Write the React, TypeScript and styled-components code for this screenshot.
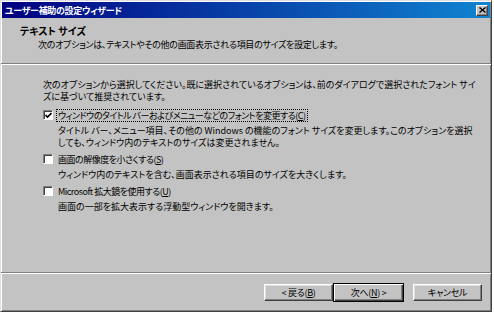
import React, { FC, ReactNode } from "react";
import styled, { createGlobalStyle } from "styled-components";

const GlobalStyle = createGlobalStyle`
  html, body {
    margin: 0;
    padding: 0;
    background: #ffffff;
  }
  body {
    font-family: "Noto Sans CJK JP", "Noto Sans", sans-serif;
    font-size: 9px;
    color: #000;
    font-feature-settings: "palt";
  }
`;

const Window = styled.div`
  width: 492px;
  height: 312px;
  box-sizing: border-box;
  display: flex;
  flex-direction: column;
  background: #c3c3c3;
  border: 1px solid;
  border-color: #dfdfdf #404040 #404040 #dfdfdf;
  box-shadow: inset 1px 1px #ffffff, inset -1px -1px #808080;
  padding: 1px;
`;

const TitleBar = styled.div`
  height: 16px;
  display: flex;
  align-items: center;
  justify-content: space-between;
  padding: 0 2px 0 3px;
  background: linear-gradient(to right, #000080, #1084d0);
  color: #ffffff;
  font-weight: bold;
  letter-spacing: -0.3px;
`;

const CloseButton = styled.div`
  width: 12px;
  height: 11px;
  box-sizing: border-box;
  display: flex;
  align-items: center;
  justify-content: center;
  background: #c3c3c3;
  border: 1px solid;
  border-color: #ffffff #404040 #404040 #ffffff;
  box-shadow: inset -1px -1px #808080;
`;

const Header = styled.div`
  height: 45px;
  box-sizing: border-box;
  padding: 6px 0 0 18px;
  line-height: 14px;
`;

const HeaderTitle = styled.div`
  font-weight: bold;
  font-size: 10px;
`;

const HeaderText = styled.div`
  padding-left: 18px;
  letter-spacing: -0.3px;
`;

const Separator = styled.div`
  height: 1px;
  background: #808080;
  border-bottom: 1px solid #ffffff;
  margin: 0 -1px;
`;

const Body = styled.div`
  flex: 1;
  padding: 14px 0 0 41px;
  line-height: 12px;
`;

const Paragraph = styled.p`
  margin: 0 0 5px;
  white-space: nowrap;
`;

const Option = styled.div`
  margin-bottom: 3px;
`;

const OptionRow = styled.label`
  display: flex;
  align-items: center;
  gap: 4px;
  height: 14px;
  white-space: nowrap;
`;

const Box = styled.span`
  width: 10px;
  height: 10px;
  box-sizing: border-box;
  display: flex;
  align-items: center;
  justify-content: center;
  background: #ffffff;
  border: 1px solid;
  border-color: #808080 #ffffff #ffffff #808080;
  box-shadow: inset 1px 1px #404040;
`;

const OptionLabel = styled.span<{ $focused?: boolean }>`
  padding: 0 1px;
  line-height: 11px;
  letter-spacing: -0.5px;
  outline: ${(p) => (p.$focused ? "1px dotted #000" : "none")};
`;

const OptionText = styled.div`
  padding: 3px 0 0 15px;
  white-space: nowrap;
`;

const Key = styled.span`
  text-decoration: underline;
`;

const ButtonRow = styled.div`
  height: 36px;
  display: flex;
  align-items: center;
  justify-content: flex-end;
  padding: 0 8px 0 0;
`;

const Button = styled.div<{ $default?: boolean; $gap?: number }>`
  width: ${(p) => (p.$default ? 71 : 69)}px;
  height: ${(p) => (p.$default ? 19 : 17)}px;
  box-sizing: border-box;
  display: flex;
  align-items: center;
  justify-content: center;
  margin-left: ${(p) => p.$gap ?? 0}px;
  background: #c3c3c3;
  border: 1px solid;
  border-color: ${(p) =>
    p.$default ? "#000000" : "#ffffff #404040 #404040 #ffffff"};
  box-shadow: ${(p) =>
    p.$default
      ? "inset 1px 1px #ffffff, inset -1px -1px #404040, inset -2px -2px #808080"
      : "inset -1px -1px #808080, inset 1px 1px #dfdfdf"};
  white-space: nowrap;
  letter-spacing: -0.3px;
`;

const Check = () => (
  <svg width="7" height="7" viewBox="0 0 7 7">
    <path d="M0.5 3 L2.5 5 L6.5 1" stroke="#000" strokeWidth="1.6" fill="none" />
  </svg>
);

const CloseIcon = () => (
  <svg width="7" height="6" viewBox="0 0 7 6">
    <path d="M0.5 0.5 L6.5 5.5 M6.5 0.5 L0.5 5.5" stroke="#000" strokeWidth="1.4" />
  </svg>
);

interface OptionProps {
  checked?: boolean;
  focused?: boolean;
  label: ReactNode;
  children: ReactNode;
}

const CheckOption: FC<OptionProps> = ({ checked, focused, label, children }) => (
  <Option>
    <OptionRow>
      <Box>{checked && <Check />}</Box>
      <OptionLabel $focused={focused}>{label}</OptionLabel>
    </OptionRow>
    <OptionText>{children}</OptionText>
  </Option>
);

export default function App() {
  return (
    <>
      <GlobalStyle />
      <Window>
        <TitleBar>
          <span>ユーザー補助の設定ウィザード</span>
          <CloseButton>
            <CloseIcon />
          </CloseButton>
        </TitleBar>
        <Header>
          <HeaderTitle>テキスト サイズ</HeaderTitle>
          <HeaderText>
            次のオプションは、テキストやその他の画面表示される項目のサイズを設定します。
          </HeaderText>
        </Header>
        <Separator />
        <Body>
          <Paragraph>
            次のオプションから選択してください。既に選択されているオプションは、前のダイアログで選択されたフォント サイ
            <br />
            ズに基づいて推奨されています。
          </Paragraph>
          <CheckOption
            checked
            focused
            label={
              <>
                ウィンドウのタイトル バーおよびメニューなどのフォントを変更する(<Key>C</Key>)
              </>
            }
          >
            タイトル バー、メニュー項目、その他の Windows の機能のフォント サイズを変更します。このオプションを選択
            <br />
            しても、ウィンドウ内のテキストのサイズは変更されません。
          </CheckOption>
          <CheckOption
            label={
              <>
                画面の解像度を小さくする(<Key>S</Key>)
              </>
            }
          >
            ウィンドウ内のテキストを含む、画面表示される項目のサイズを大きくします。
          </CheckOption>
          <CheckOption
            label={
              <>
                Microsoft 拡大鏡を使用する(<Key>U</Key>)
              </>
            }
          >
            画面の一部を拡大表示する浮動型ウィンドウを開きます。
          </CheckOption>
        </Body>
        <Separator />
        <ButtonRow>
          <Button>
            &lt; 戻る(<Key>B</Key>)
          </Button>
          <Button $default>
            次へ(<Key>N</Key>) &gt;
          </Button>
          <Button $gap={9}>キャンセル</Button>
        </ButtonRow>
      </Window>
    </>
  );
}
